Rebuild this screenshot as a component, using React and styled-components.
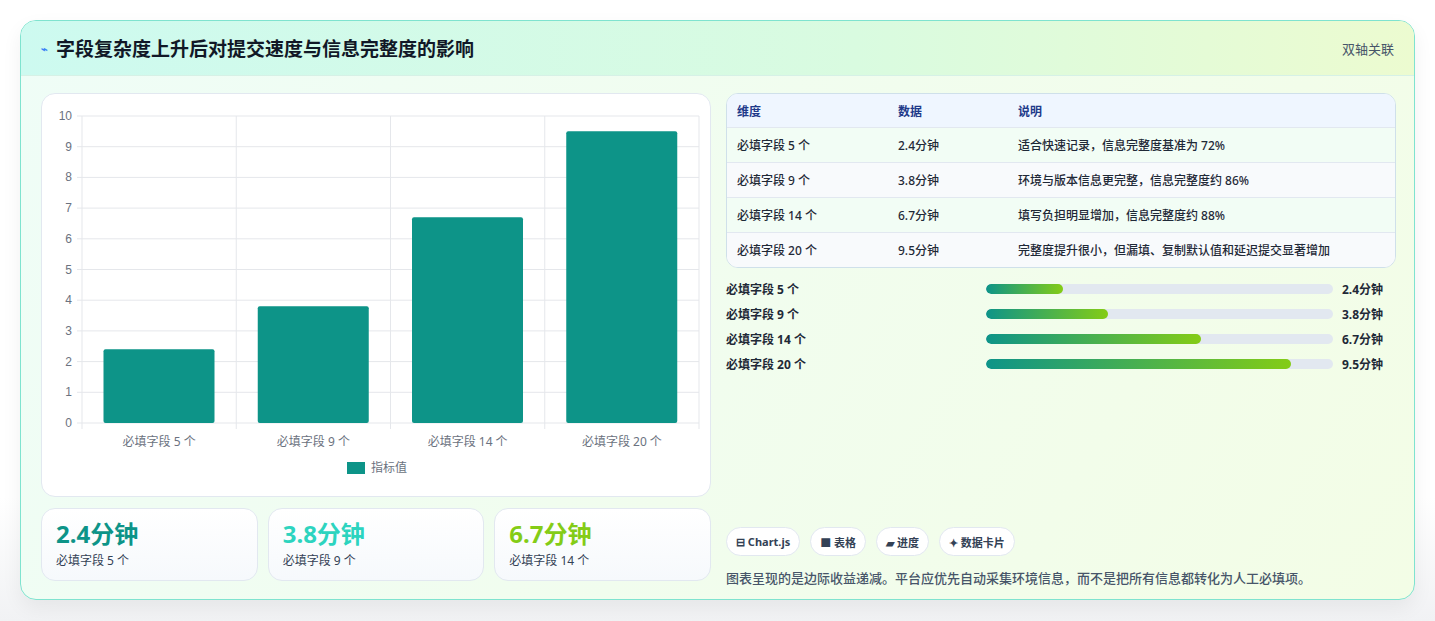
import React from "react";
import styled, { createGlobalStyle } from "styled-components";

const Global = createGlobalStyle`
  body { margin: 0; background: #fff; font-family: "Noto Sans", "Noto Sans CJK SC", sans-serif; }
  * { box-sizing: border-box; }
`;
const Page = styled.div`padding: 20px; height: 621px; background: linear-gradient(#fff 80%, #f1f2f4);`;
const Card = styled.div`
  border: 1px solid #7fe3cf; border-radius: 16px; overflow: hidden; height: 580px;
  background: linear-gradient(120deg, #effdf7, #f3fde6);
  box-shadow: 0 8px 20px rgba(0,0,0,0.06);
`;
const Header = styled.div`
  height: 55px; display: flex; align-items: center; justify-content: space-between; padding: 0 20px;
  background: linear-gradient(90deg, #cdfaf0, #d9fbe0 60%, #ecfbd0);
  border-bottom: 1px solid #d6f1e6;
`;
const Title = styled.h1`margin: 0; font-size: 19px; font-weight: 700; color: #111827; display: flex; align-items: center; gap: 8px;`;
const Tag = styled.span`font-size: 13px; color: #475569;`;
const Body = styled.div`display: grid; grid-template-columns: 670px 670px; gap: 15px; padding: 17px 20px 0;`;
const Col = styled.div`display: flex; flex-direction: column;`;
const ChartBox = styled.div`background: #fff; border: 1px solid #e2e8f0; border-radius: 14px; height: 404px; position: relative;`;
const Stats = styled.div`display: grid; grid-template-columns: repeat(3, 1fr); gap: 10px; margin-top: 11px;`;
const Stat = styled.div`
  height: 73px; border: 1px solid #e2e8f0; border-radius: 14px; padding: 10px 14px;
  background: linear-gradient(#fff, #f6f9fc);
`;
const StatVal = styled.div`font-size: 24px; font-weight: 700; color: ${p => p.c}; line-height: 30px;`;
const StatLbl = styled.div`font-size: 12px; color: #334155; margin-top: 2px;`;
const Table = styled.div`border: 1px solid #cfe0ea; border-radius: 12px; overflow: hidden; background: #fff;`;
const Row = styled.div`
  display: grid; grid-template-columns: 161px 120px 1fr; align-items: center; padding: 0 10px;
  height: ${p => p.h ? 33 : 35}px; font-size: 12px; font-weight: ${p => p.h ? 700 : 500};
  color: ${p => p.h ? "#1e3a8a" : "#1f2937"};
  background: ${p => p.h ? "#eff6ff" : p.alt ? "#f8fafc" : "#f2fdf5"};
  border-top: ${p => p.h ? "none" : "1px solid #e2e8f0"};
`;
const Bars = styled.div`display: flex; flex-direction: column; gap: 9px; margin-top: 12px;`;
const BarRow = styled.div`display: grid; grid-template-columns: 251px 347px 1fr; align-items: center; column-gap: 9px; font-size: 12px; font-weight: 700; color: #1f2937; height: 16px;`;
const Track = styled.div`height: 10px; background: #e2e8f0; border-radius: 5px; overflow: hidden;`;
const Fill = styled.div`height: 100%; border-radius: 5px; background: linear-gradient(90deg, #0d9488, #84cc16);`;
const Chips = styled.div`display: flex; gap: 10px; margin-top: 156px;`;
const Chip = styled.span`
  height: 29px; padding: 0 9px; border: 1px solid #e2e8f0; border-radius: 15px; background: #fff;
  font-size: 11px; font-weight: 700; color: #334155; display: flex; align-items: center; gap: 4px;
`;
const Note = styled.p`margin: 12px 0 0; font-size: 13px; color: #475569; font-weight: 500;`;

const data = [["必填字段 5 个", 2.4, "适合快速记录，信息完整度基准为 72%"], ["必填字段 9 个", 3.8, "环境与版本信息更完整，信息完整度约 86%"], ["必填字段 14 个", 6.7, "填写负担明显增加，信息完整度约 88%"], ["必填字段 20 个", 9.5, "完整度提升很小，但漏填、复制默认值和延迟提交显著增加"]];

function Chart() {
  const L = 40, T = 22, W = 617, H = 307;
  const y = v => T + H - (v / 10) * H;
  const cw = W / 4;
  return (
    <svg width="670" height="404" style={{ display: "block" }}>
      {Array.from({ length: 11 }, (_, i) => (
        <g key={i}>
          <line x1={L - 5} x2={L + W} y1={y(i)} y2={y(i)} stroke="#e5e7eb" />
          <text x={L - 10} y={y(i) + 4} textAnchor="end" fontSize="12" fill="#6b7280" fontFamily="Liberation Sans, sans-serif">{i}</text>
        </g>
      ))}
      {[0, 1, 2, 3, 4].map(i => <line key={i} x1={L + i * cw} x2={L + i * cw} y1={T} y2={T + H + 6} stroke="#e5e7eb" />)}
      {data.map((d, i) => (
        <g key={i}>
          <rect x={L + i * cw + 21.5} y={y(d[1])} width="111" height={T + H - y(d[1])} fill="#0d9488" rx="2" />
          <text x={L + i * cw + cw / 2} y={T + H + 23} textAnchor="middle" fontSize="12" fill="#6b7280">{d[0]}</text>
        </g>
      ))}
      <rect x="305" y="368" width="18" height="12" fill="#0d9488" />
      <text x="329" y="378" fontSize="12" fill="#6b7280">指标值</text>
    </svg>
  );
}

export default function App() {
  const colors = ["#0d9488", "#2dd4bf", "#84cc16"];
  return (
    <Page>
      <Global />
      <Card>
        <Header>
          <Title><span style={{ fontSize: 11, color: "#3b82f6" }}>⌁</span>字段复杂度上升后对提交速度与信息完整度的影响</Title>
          <Tag>双轴关联</Tag>
        </Header>
        <Body>
          <Col>
            <ChartBox><Chart /></ChartBox>
            <Stats>
              {data.slice(0, 3).map((d, i) => (
                <Stat key={i}><StatVal c={colors[i]}>{d[1]}分钟</StatVal><StatLbl>{d[0]}</StatLbl></Stat>
              ))}
            </Stats>
          </Col>
          <Col>
            <Table>
              <Row h><span>维度</span><span>数据</span><span>说明</span></Row>
              {data.map((d, i) => <Row key={i} alt={i % 2 === 1}><span>{d[0]}</span><span>{d[1]}分钟</span><span>{d[2]}</span></Row>)}
            </Table>
            <Bars>
              {data.map((d, i) => (
                <BarRow key={i}><span>{d[0]}</span><Track><Fill style={{ width: `${d[1] * 9.25}%` }} /></Track><span>{d[1]}分钟</span></BarRow>
              ))}
            </Bars>
            <Chips>
              <Chip>⊟ Chart.js</Chip><Chip>■ 表格</Chip><Chip>▰ 进度</Chip><Chip>✦ 数据卡片</Chip>
            </Chips>
            <Note>图表呈现的是边际收益递减。平台应优先自动采集环境信息，而不是把所有信息都转化为人工必填项。</Note>
          </Col>
        </Body>
      </Card>
    </Page>
  );
}
